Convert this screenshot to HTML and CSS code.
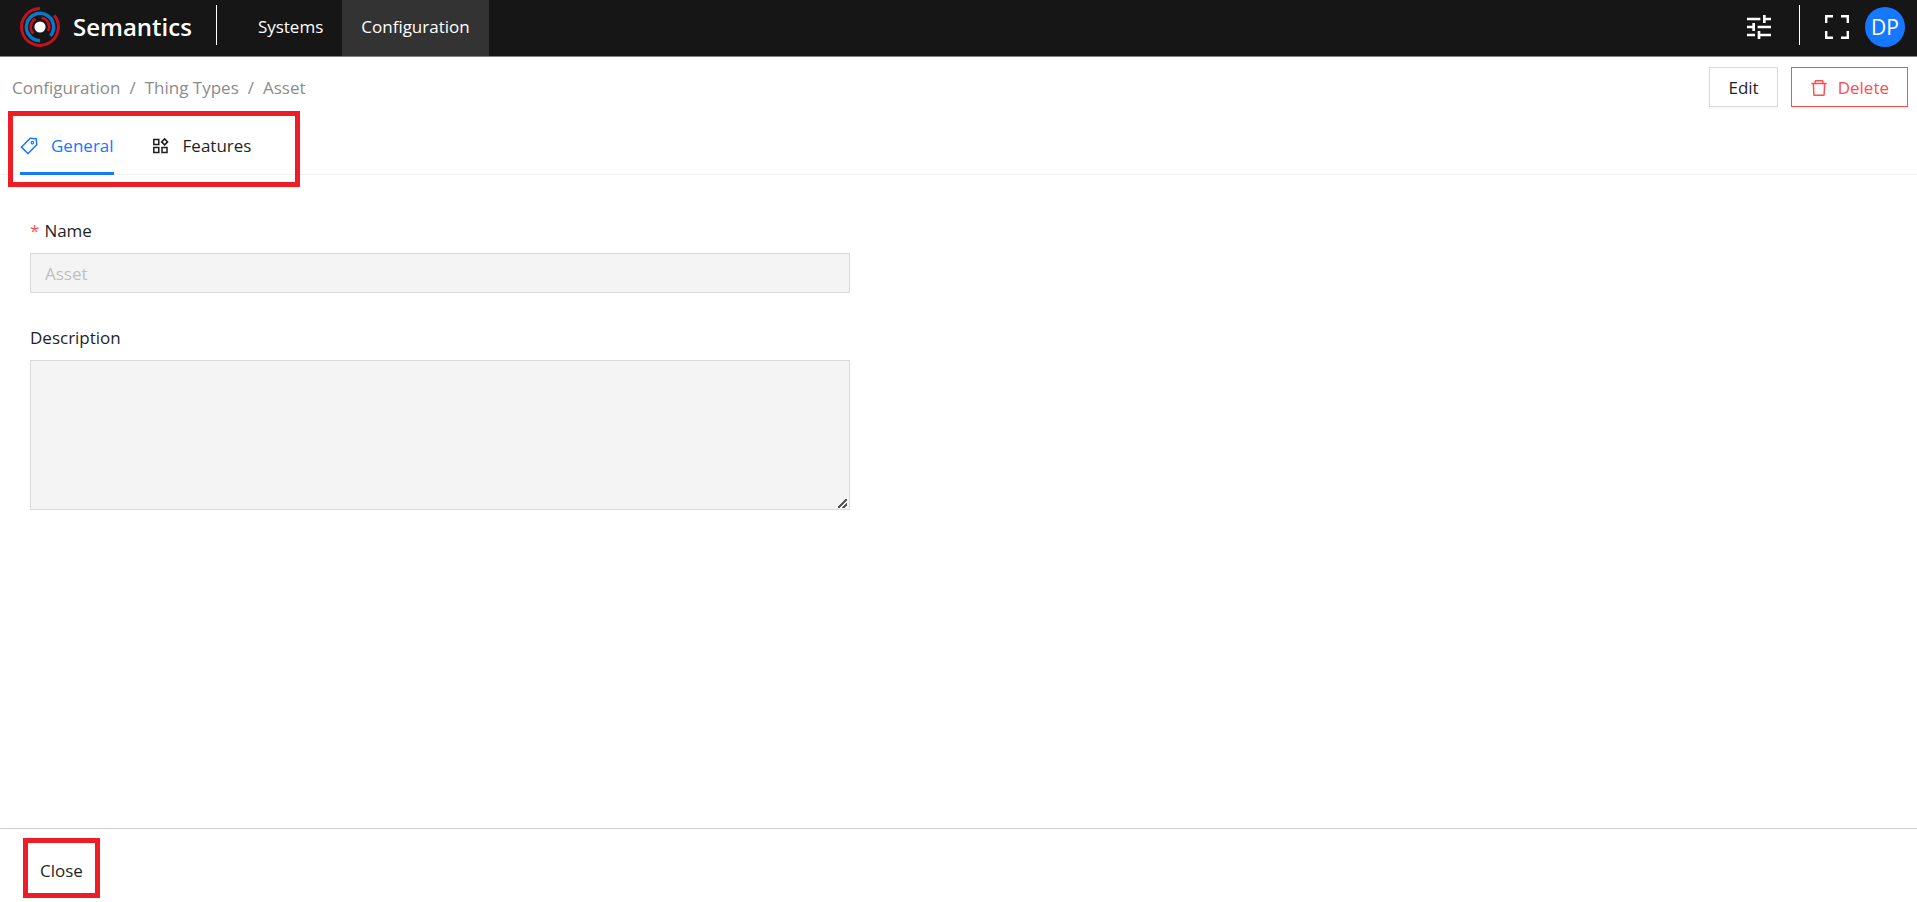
FILE: index.html
```html
<!DOCTYPE html>
<html lang="en">
<head>
    <meta charset="UTF-8">
    <meta name="viewport" content="width=device-width, initial-scale=1.0">
    <title>Semantics</title>
    <link rel="stylesheet" href="styles.css">
</head>
<body>
    <header class="header">
        <a class="brand" href="#">
            <svg class="logo" viewBox="0 0 40 40" fill="none" aria-hidden="true">
                <path d="M20 1.6A18.4 18.4 0 1 0 34.1 8.2" stroke="#c1121f" stroke-width="3"/>
                <path d="M20 33.6A13.6 13.6 0 1 1 30.4 28.8" stroke="#0a78c4" stroke-width="3.4"/>
                <path d="M13.4 26.6A9.2 9.2 0 0 1 15.5 12M21.5 10.9A9.2 9.2 0 0 1 28.3 24" stroke="#c1121f" stroke-width="2.8"/>
                <circle cx="20" cy="20" r="5.6" fill="#fff"/>
            </svg>
            <span class="brand-name">Semantics</span>
        </a>
        <span class="divider"></span>
        <nav class="nav">
            <a href="#">Systems</a>
            <a class="active" href="#">Configuration</a>
        </nav>
        <div class="header-actions">
            <button class="icon-button" type="button" aria-label="Settings">
                <svg width="24" height="24" viewBox="3 3 18 18" fill="currentColor"><path d="M3 17v2h6v-2H3zM3 5v2h10V5H3zm10 16v-2h8v-2h-8v-2h-2v6h2zM7 9v2H3v2h4v2h2V9H7zm14 4v-2H11v2h10zm-6-4h2V7h4V5h-4V3h-2v6z"/></svg>
            </button>
            <span class="divider"></span>
            <button class="icon-button" type="button" aria-label="Full screen">
                <svg width="24" height="24" viewBox="0 0 24 24" fill="none" stroke="currentColor" stroke-width="2.4"><path d="M1.2 8V1.2H8M16 1.2h6.8V8M22.8 16v6.8H16M8 22.8H1.2V16"/></svg>
            </button>
            <button class="avatar" type="button">DP</button>
        </div>
    </header>

    <div class="page-bar">
        <nav class="breadcrumb" aria-label="Breadcrumb">
            <a href="#">Configuration</a>
            <span>/</span>
            <a href="#">Thing Types</a>
            <span>/</span>
            <a href="#">Asset</a>
        </nav>
        <div class="page-actions">
            <button class="btn" type="button">Edit</button>
            <button class="btn btn-danger" type="button">
                <svg width="18" height="18" viewBox="64 64 896 896" fill="currentColor" aria-hidden="true"><path d="M360 184h-8c4.4 0 8-3.6 8-8v8h304v-8c0 4.4 3.6 8 8 8h-8v72h72v-80c0-35.3-28.7-64-64-64H352c-35.3 0-64 28.7-64 64v80h72v-72zm504 72H160c-17.7 0-32 14.3-32 32v32c0 4.4 3.6 8 8 8h60.4l24.7 523c1.6 34.1 29.8 61 63.9 61h454c34.2 0 62.3-26.8 63.9-61l24.7-523H888c4.4 0 8-3.6 8-8v-32c0-17.7-14.3-32-32-32zM731.3 840H292.7l-24.2-512h487l-24.2 512z"/></svg>
                Delete
            </button>
        </div>
    </div>

    <div class="tabs">
        <div class="tab-list" role="tablist">
            <button class="tab active" type="button" role="tab" aria-selected="true">
                <svg width="18" height="18" viewBox="64 64 896 896" fill="currentColor" aria-hidden="true"><path d="M938 458.8l-29.6-312.6c-1.5-16.2-14.4-29-30.6-30.6L565.2 86h-.4c-3.2 0-5.7 1-7.6 2.9L88.9 557.2a9.96 9.96 0 0 0 0 14.1l363.8 363.8c1.9 1.9 4.4 2.9 7.1 2.9s5.2-1 7.1-2.9l468.3-468.3c2-2.1 3-5 2.8-8zM459.7 834.7L189.3 564.3 589 164.6 836 188l23.4 247-399.7 399.7zM680 256c-48.5 0-88 39.5-88 88s39.5 88 88 88 88-39.5 88-88-39.5-88-88-88zm0 120c-17.7 0-32-14.3-32-32s14.3-32 32-32 32 14.3 32 32-14.3 32-32 32z"/></svg>
                General
            </button>
            <button class="tab" type="button" role="tab" aria-selected="false">
                <svg width="18" height="18" viewBox="0 0 18 18" fill="none" stroke="currentColor" stroke-width="1.5" aria-hidden="true"><path d="M1.8 2.5h5v5h-5zM1.8 10.5h5v5h-5zM10 10.5h5v5h-5zM12.6 1.9l3 3-3 3-3-3z"/></svg>
                Features
            </button>
        </div>
    </div>

    <main class="content">
        <form class="form">
            <div class="field">
                <label class="required" for="name">Name</label>
                <input id="name" type="text" value="Asset" disabled>
            </div>
            <div class="field">
                <label for="description">Description</label>
                <textarea id="description" disabled></textarea>
            </div>
        </form>
    </main>

    <footer class="footer">
        <button class="close-button" type="button">Close</button>
    </footer>
</body>
</html>
```
FILE: styles.css
```css
* {
    box-sizing: border-box;
}
body {
    margin: 0;
    min-height: 100vh;
    display: flex;
    flex-direction: column;
    font-family: "Segoe UI", "Open Sans", "Noto Sans", sans-serif;
    font-size: 17px;
    line-height: 28px;
    color: #1f1f1f;
    background: #fff;
}
a {
    color: inherit;
    text-decoration: none;
}
button,
input,
textarea {
    font: inherit;
    color: inherit;
}
button {
    padding: 0;
    border: none;
    background: none;
    cursor: pointer;
}
svg {
    display: block;
    flex: none;
}

/* Header */
.header {
    display: flex;
    height: 57px;
    padding: 0 12px 0 20px;
    color: #fff;
    background: #161616;
    border-bottom: 1px solid #7f7f7f;
}
.brand {
    display: flex;
    align-items: center;
    gap: 13px;
    height: 54px;
    margin-right: 24px;
}
.logo {
    width: 40px;
    height: 40px;
}
.brand-name {
    font-size: 24px;
    font-weight: 600;
}
.divider {
    width: 1px;
    height: 40px;
    margin-top: 5px;
    background: #fff;
}
.nav {
    display: flex;
    margin-left: 22px;
}
.nav a {
    padding: 0 19px;
    line-height: 54px;
}
.nav .active {
    background: #333;
}
.header-actions {
    display: flex;
    height: 54px;
    margin-left: auto;
}
.header-actions .divider {
    margin-left: 28px;
    margin-right: 25px;
}
.avatar {
    align-self: center;
    width: 40px;
    height: 40px;
    margin-left: 16px;
    border-radius: 50%;
    font-size: 21px;
    background: #1677ff;
}

/* Breadcrumb and page actions */
.page-bar {
    display: flex;
    justify-content: space-between;
    align-items: center;
    padding: 10px 9px 4px 12px;
}
.breadcrumb {
    display: flex;
    gap: 9px;
    padding-top: 2px;
    color: #8c8c8c;
}
.page-actions {
    display: flex;
    gap: 13px;
}
.btn {
    display: flex;
    align-items: center;
    gap: 10px;
    height: 40px;
    padding: 1px 18px 0;
    border: 1px solid #d9d9d9;
    background: #fff;
    box-shadow: 0 2px 0 rgba(0, 0, 0, 0.02);
}
.btn-danger {
    color: #ff4d4f;
    border-color: #ff4d4f;
}

/* Tabs */
.tabs {
    padding: 0 8px;
    border-bottom: 1px solid #f0f0f0;
}
.tab-list {
    position: relative;
    display: flex;
    gap: 38px;
    width: 292px;
    height: 63px;
    padding-left: 12px;
}
.tab-list::after {
    content: "";
    position: absolute;
    inset: 0 0 -13px;
    border: 5px solid #ee1c25;
    pointer-events: none;
}
.tab {
    display: flex;
    align-items: center;
    gap: 13px;
    height: 64px;
    padding-top: 9px;
    border-bottom: 3px solid transparent;
}
.tab.active {
    color: #1677ff;
    border-bottom-color: #1677ff;
}

/* Form */
.content {
    flex: 1;
    padding: 42px 30px;
}
.form {
    max-width: 820px;
}
.field {
    margin-bottom: 31px;
}
.field label {
    display: block;
    margin-bottom: 8px;
}
.required::before {
    content: "*";
    margin-right: 5px;
    color: #ff4d4f;
}
.field input,
.field textarea {
    display: block;
    width: 100%;
    height: 40px;
    padding: 0 14px;
    border: 1px solid #d9d9d9;
    border-radius: 0;
    color: #bfbfbf;
    background: #f4f4f4;
}
.field textarea {
    height: 150px;
    resize: vertical;
}
.field textarea::-webkit-resizer {
    background: linear-gradient(135deg, transparent 41%, #555 41% 56%, transparent 56% 71%, #555 71% 86%, transparent 86%) 4px 5px / 9px 9px no-repeat;
}

/* Footer */
.footer {
    padding: 9px 23px 4px;
    border-top: 1px solid #d0d0d0;
}
.close-button {
    height: 60px;
    padding: 5px 12px 0;
    border: 5px solid #ee1c25;
}
```
